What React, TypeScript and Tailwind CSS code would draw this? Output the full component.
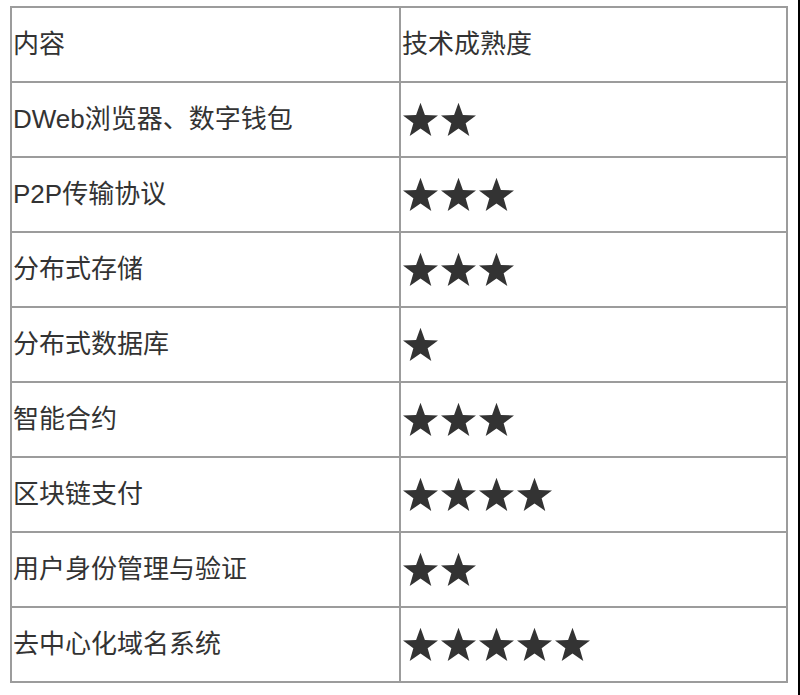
import React from "react";

const rows = [
  { name: "DWeb浏览器、数字钱包", stars: 2 },
  { name: "P2P传输协议", stars: 3 },
  { name: "分布式存储", stars: 3 },
  { name: "分布式数据库", stars: 1 },
  { name: "智能合约", stars: 3 },
  { name: "区块链支付", stars: 4 },
  { name: "用户身份管理与验证", stars: 2 },
  { name: "去中心化域名系统", stars: 5 },
];

const Star: React.FC = () => (
  <svg width="37" height="35" viewBox="0 0 24 23" className="shrink-0">
    <polygon
      points="12,0.5 14.9,8.6 23.5,8.8 16.7,14 19.1,22.3 12,17.4 4.9,22.3 7.3,14 0.5,8.8 9.1,8.6"
      fill="#333333"
    />
  </svg>
);

const App: React.FC = () => {
  return (
    <div
      className="flex w-[800px] h-[695px] bg-white text-[#333] text-[26px]"
      style={{ fontFamily: '"Liberation Sans", "Noto Sans CJK SC", sans-serif' }}
    >
      <div className="flex-1 pt-[6px] pl-[10px] pr-[8px]">
        <table className="w-[778px] border-collapse border-2 border-[#9c9c9c]">
          <tbody>
            <tr className="h-[75px]">
              <td className="w-[389px] border-2 border-[#9c9c9c] pl-[1px] align-middle">内容</td>
              <td className="border-2 border-[#9c9c9c] pl-[1px] align-middle">技术成熟度</td>
            </tr>
            {rows.map((row, index) => (
              <tr key={index} className="h-[75px]">
                <td className="border-2 border-[#9c9c9c] pl-[1px] align-middle">{row.name}</td>
                <td className="border-2 border-[#9c9c9c] pl-[1px] align-middle">
                  <div className="flex gap-[1px]">
                    {Array.from({ length: row.stars }).map((_, i) => (
                      <Star key={i} />
                    ))}
                  </div>
                </td>
              </tr>
            ))}
          </tbody>
        </table>
      </div>
      <div className="w-[2px] bg-black" />
    </div>
  );
};

export default App;
